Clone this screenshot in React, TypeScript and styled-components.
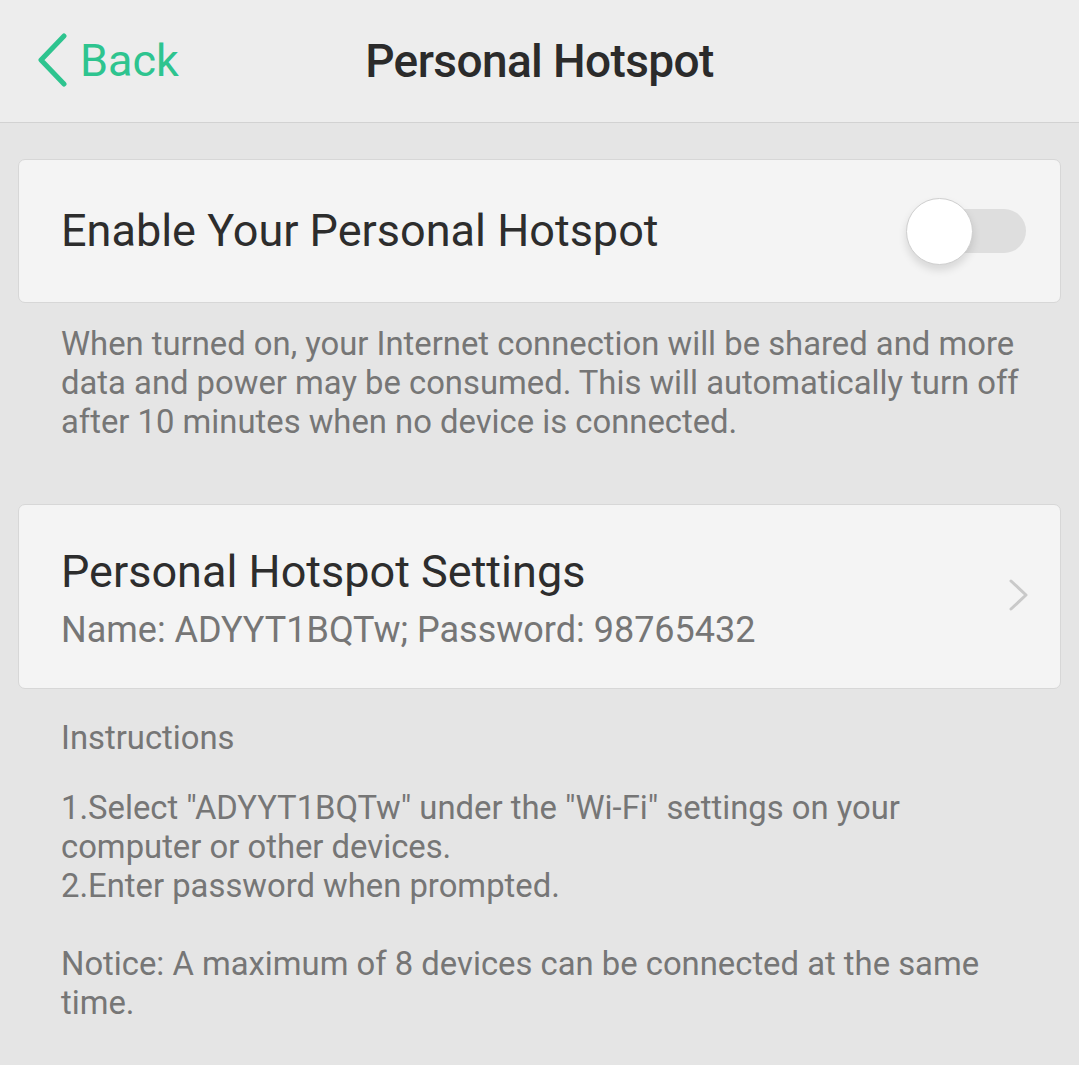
import React from "react";
import styled, { createGlobalStyle } from "styled-components";

const Global = createGlobalStyle`
  html, body { margin: 0; padding: 0; background: #e5e5e5; }
  body { font-family: Roboto, "Noto Sans", sans-serif; -webkit-font-smoothing: antialiased; }
  * { box-sizing: border-box; }
`;

const Page = styled.div`
  width: 1079px;
  min-height: 1065px;
  background: #e5e5e5;
  display: flex;
  flex-direction: column;
`;

const Header = styled.header`
  height: 123px;
  background: #ededed;
  border-bottom: 1px solid #d2d2d2;
  display: grid;
  grid-template-columns: 1fr auto 1fr;
  align-items: center;
  padding: 0 36px;
`;

const BackButton = styled.button`
  border: 0;
  background: transparent;
  padding: 0;
  display: flex;
  align-items: center;
  gap: 12px;
  color: #2ec48f;
  font-family: Roboto, sans-serif;
  font-size: 45px;
  cursor: pointer;
  justify-self: start;
  margin-top: -2px;
`;

const Title = styled.h1`
  margin: 0;
  font-family: Roboto, sans-serif;
  font-weight: 500;
  font-size: 46px;
  letter-spacing: -0.6px;
  color: #2b2b2b;
`;

const Content = styled.main`
  padding: 36px 18px 0 18px;
  display: flex;
  flex-direction: column;
`;

const Card = styled.div<{ $height: number; $mt?: number }>`
  height: ${(p) => p.$height}px;
  margin-top: ${(p) => p.$mt ?? 0}px;
  background: #f4f4f4;
  border: 1px solid #d7d7d7;
  border-radius: 7px;
  display: flex;
  align-items: center;
  justify-content: space-between;
  padding: 0 34px 0 42px;
`;

const CardText = styled.div`
  display: flex;
  flex-direction: column;
  gap: 14px;
  margin-top: 4px;
`;

const CardTitle = styled.div`
  font-size: 45px;
  color: #2d2d2d;
  line-height: 48px;
`;

const CardSub = styled.div`
  font-size: 36px;
  color: #767676;
  line-height: 40px;
`;

const Note = styled.p<{ $mt: number }>`
  margin: ${(p) => p.$mt}px 0 0 0;
  padding: 0 30px 0 43px;
  font-size: 32.8px;
  line-height: 39px;
  color: #767676;
`;

const Switch = styled.div`
  position: relative;
  width: 120px;
  height: 70px;
  display: flex;
  align-items: center;
  justify-content: flex-end;
`;

const Track = styled.div`
  width: 86px;
  height: 44px;
  border-radius: 22px;
  background: #dedede;
`;

const Knob = styled.div`
  position: absolute;
  left: 0;
  top: 2px;
  width: 67px;
  height: 67px;
  border-radius: 50%;
  background: #ffffff;
  border: 1px solid #cfcfcf;
  box-shadow: 0 5px 8px rgba(0, 0, 0, 0.12);
`;

const Chevron = styled.svg`
  margin-right: -4px;
  margin-top: -4px;
`;

export default function App() {
  return (
    <Page>
      <Global />
      <Header>
        <BackButton>
          <svg width="32" height="54" viewBox="0 0 32 54" fill="none">
            <path d="M28 3 L5 27 L28 51" stroke="#2ec48f" strokeWidth="5" strokeLinecap="round" strokeLinejoin="round" />
          </svg>
          Back
        </BackButton>
        <Title>Personal Hotspot</Title>
        <div />
      </Header>
      <Content>
        <Card $height={144}>
          <CardTitle>Enable Your Personal Hotspot</CardTitle>
          <Switch>
            <Track />
            <Knob />
          </Switch>
        </Card>
        <Note $mt={22}>
          When turned on, your Internet connection will be shared and more data and power may be consumed. This will automatically turn off after 10 minutes when no device is connected.
        </Note>
        <Card $height={185} $mt={62}>
          <CardText>
            <CardTitle>Personal Hotspot Settings</CardTitle>
            <CardSub>Name: ADYYT1BQTw; Password: 98765432</CardSub>
          </CardText>
          <Chevron width="22" height="34" viewBox="0 0 22 34" fill="none">
            <path d="M3 3 L18 17 L3 31" stroke="#c9c9c9" strokeWidth="3" strokeLinecap="round" strokeLinejoin="round" />
          </Chevron>
        </Card>
        <Note $mt={30}>Instructions</Note>
        <Note $mt={31}>
          1.Select "ADYYT1BQTw" under the "Wi-Fi" settings on your computer or other devices.
          <br />
          2.Enter password when prompted.
          <br />
          <br />
          Notice: A maximum of 8 devices can be connected at the same time.
        </Note>
      </Content>
    </Page>
  );
}
